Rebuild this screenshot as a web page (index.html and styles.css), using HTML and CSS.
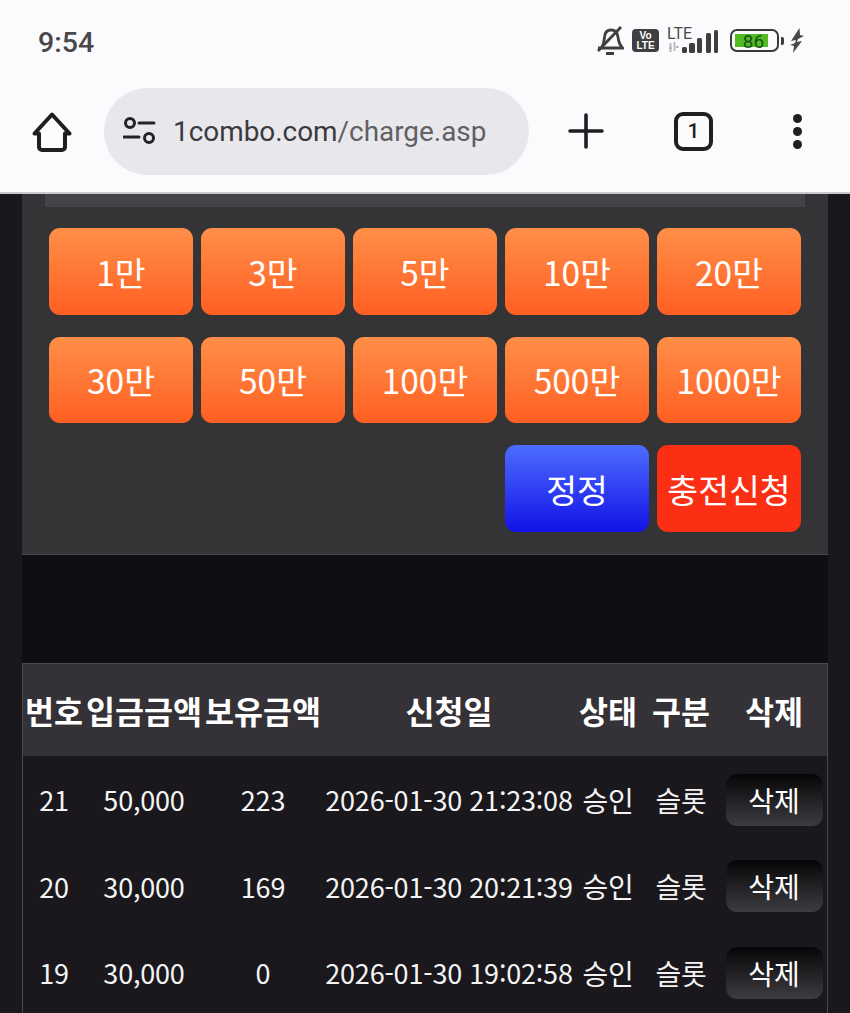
FILE: index.html
```html
<!DOCTYPE html>
<html lang="ko">
<head>
    <meta charset="UTF-8">
    <meta name="viewport" content="width=device-width, initial-scale=1.0">
    <title>1combo charge</title>
    <link rel="stylesheet" href="styles.css">
</head>
<body>
    <header class="browser">
        <div class="status-bar">
            <span class="clock">9:54</span>
            <div class="status-icons">
                <svg class="icon-bell" width="28" height="30" viewBox="0 0 28 30" fill="none" stroke="#3f3f42" stroke-width="2.800">
                    <path d="M6 21c2-3 2-6 2.500-10C9 6 12 4 15 4c4 0 6.500 3 7 7 .4 4 1 7 4.500 11H2"/>
                    <path d="M2 25 25 1" stroke-width="2.800"/>
                    <path d="M10 27.500h8" stroke-width="3"/>
                </svg>
                <div class="volte"><span>Vo</span><span>LTE</span></div>
                <div class="network">
                    <span class="lte">LTE</span>
                    <svg width="52" height="24" viewBox="0 0 52 24">
                        <path d="M2 18h3M3.500 13v9M7.500 12v9M9 17h2.500" stroke="#b5b5b8" stroke-width="1.800" fill="none"/>
                        <rect x="15" y="17" width="5" height="6" rx="1.500" fill="#3f3f42"/>
                        <rect x="22" y="13" width="6" height="10" rx="1.500" fill="#3f3f42"/>
                        <rect x="30" y="8" width="5" height="15" rx="1.500" fill="#3f3f42"/>
                        <rect x="39" y="3" width="5" height="20" rx="1.500" fill="#3f3f42"/>
                        <rect x="47" y="0" width="4" height="23" rx="1.500" fill="#3f3f42"/>
                    </svg>
                </div>
                <div class="battery">
                    <div class="battery-body"><span class="battery-level">86</span></div>
                    <span class="battery-tip"></span>
                </div>
                <svg class="icon-bolt" width="14" height="25" viewBox="0 0 14 25"><path d="M9.500 0 1 13l5-1-1 3-5 2 4 1-1 7 9-12-5 1 1-3 6-3-4-1z" fill="#48484b"/></svg>
            </div>
        </div>
        <div class="toolbar">
            <svg class="tool-home" width="40" height="40" viewBox="0 0 40 40" fill="none" stroke="#1f1f22" stroke-width="4" stroke-linejoin="round">
                <path d="M2.500 21.500 20 2.500l17.500 19H33V35a3 3 0 0 1-3 3H10a3 3 0 0 1-3-3V21.500z"/>
            </svg>
            <div class="address">
                <svg width="34" height="28" viewBox="0 0 34 28" fill="none" stroke="#232327" stroke-width="3">
                    <circle cx="7" cy="6" r="4.500"/>
                    <path d="M16 6h15M1 20h15" stroke-linecap="round"/>
                    <circle cx="26" cy="21" r="4.500"/>
                </svg>
                <span class="url"><span class="url-host">1combo.com</span>/charge.asp</span>
            </div>
            <svg class="tool-plus" width="36" height="36" viewBox="0 0 36 36" stroke="#1f1f22" stroke-width="3.600" stroke-linecap="round">
                <path d="M18 2v32M2 18h32"/>
            </svg>
            <div class="tab-count">1</div>
            <div class="tool-menu"><span></span><span></span><span></span></div>
        </div>
    </header>

    <main class="page">
        <section class="charge-panel">
            <div class="field-edge"></div>
            <div class="amount-grid">
                <button class="btn btn-amount">1만</button>
                <button class="btn btn-amount">3만</button>
                <button class="btn btn-amount">5만</button>
                <button class="btn btn-amount">10만</button>
                <button class="btn btn-amount">20만</button>
                <button class="btn btn-amount">30만</button>
                <button class="btn btn-amount">50만</button>
                <button class="btn btn-amount">100만</button>
                <button class="btn btn-amount">500만</button>
                <button class="btn btn-amount">1000만</button>
                <button class="btn btn-reset">정정</button>
                <button class="btn btn-apply">충전신청</button>
            </div>
        </section>

        <section class="history">
            <table class="history-table">
                <colgroup>
                    <col class="col-no"><col class="col-deposit"><col class="col-hold"><col class="col-date"><col class="col-state"><col class="col-type"><col class="col-del">
                </colgroup>
                <thead>
                    <tr><th>번호</th><th>입금금액</th><th>보유금액</th><th>신청일</th><th>상태</th><th>구분</th><th>삭제</th></tr>
                </thead>
                <tbody>
                    <tr><td>21</td><td>50,000</td><td>223</td><td>2026-01-30 21:23:08</td><td class="cell-ko">승인</td><td class="cell-ko">슬롯</td><td><button class="btn-del">삭제</button></td></tr>
                    <tr><td>20</td><td>30,000</td><td>169</td><td>2026-01-30 20:21:39</td><td class="cell-ko">승인</td><td class="cell-ko">슬롯</td><td><button class="btn-del">삭제</button></td></tr>
                    <tr><td>19</td><td>30,000</td><td>0</td><td>2026-01-30 19:02:58</td><td class="cell-ko">승인</td><td class="cell-ko">슬롯</td><td><button class="btn-del">삭제</button></td></tr>
                </tbody>
            </table>
        </section>
    </main>
</body>
</html>
```

FILE: styles.css
```css
/* General Page Styling */
html, body {
    margin: 0;
    padding: 0;
    height: 1013px;
    overflow: hidden;
}

body {
    background: #1a181c;
    font-family: "Noto Sans CJK KR", "Noto Sans", sans-serif;
    color: #ffffff;
}

/* Browser chrome */
.browser {
    background: #fbfafd;
    height: 192px;
    border-bottom: 2px solid #c9c9cc;
    box-sizing: content-box;
}

.status-bar {
    height: 84px;
    padding: 0 46px 0 38px;
    display: flex;
    justify-content: space-between;
    align-items: center;
    box-sizing: border-box;
}

.clock {
    font-family: Roboto, sans-serif;
    font-size: 28.500px;
    font-weight: 500;
    color: #48484b;
}

.status-icons {
    display: flex;
    align-items: center;
    gap: 8px;
    margin-top: -3px;
}

.icon-bolt {
    margin-left: -2px;
}

.volte {
    width: 27px;
    height: 23px;
    background: #3f3f42;
    border-radius: 4px;
    color: #ffffff;
    font-family: "Liberation Sans", sans-serif;
    font-size: 10px;
    font-weight: 700;
    line-height: 10px;
    display: flex;
    flex-direction: column;
    align-items: center;
    justify-content: center;
}

.network {
    width: 52px;
    height: 28px;
    position: relative;
}

.network svg {
    position: absolute;
    left: 0;
    top: 3px;
}

.lte {
    position: absolute;
    left: 0;
    top: -1px;
    font-family: Roboto, sans-serif;
    font-size: 16px;
    line-height: 16px;
    color: #48484b;
}

.battery {
    display: flex;
    align-items: center;
    gap: 2px;
    margin-left: 3px;
}

.battery-body {
    width: 49px;
    height: 23px;
    border: 2px solid #3a3a3d;
    border-radius: 7px;
    padding: 3px 9px 3px 3px;
    box-sizing: border-box;
}

.battery-level {
    display: block;
    height: 100%;
    padding-left: 4px;
    box-sizing: border-box;
    background: #55bb22;
    color: #14521a;
    font-family: Roboto, sans-serif;
    font-size: 19px;
    line-height: 15px;
    text-align: center;
}

.battery-tip {
    width: 3px;
    height: 8px;
    background: #3a3a3d;
    border-radius: 0 2px 2px 0;
}

.toolbar {
    height: 108px;
    display: flex;
    align-items: center;
    padding-left: 32px;
    box-sizing: border-box;
    margin-top: -7px;
}

.tool-home {
    margin-right: 32px;
    margin-top: 2px;
}

.address {
    width: 425px;
    height: 87px;
    background: #e8e8ec;
    border-radius: 44px;
    display: flex;
    align-items: center;
    gap: 16px;
    padding-left: 19px;
    box-sizing: border-box;
    color: #5f6064;
}

.url {
    font-family: Roboto, sans-serif;
    font-size: 27.900px;
}

.url-host {
    color: #3a3a3e;
}

.tool-plus {
    margin-left: 39px;
}

.tab-count {
    width: 39px;
    height: 39px;
    margin-left: 70px;
    border: 4px solid #1f1f22;
    border-radius: 9px;
    box-sizing: border-box;
    color: #1f1f22;
    font-family: Roboto, sans-serif;
    font-size: 21px;
    font-weight: 500;
    display: flex;
    align-items: center;
    justify-content: center;
}

.tool-menu {
    margin-left: 80px;
    display: flex;
    flex-direction: column;
    gap: 4px;
}

.tool-menu span {
    width: 9px;
    height: 9px;
    background: #1f1f22;
    border-radius: 50%;
}

/* Page body */
.page {
    margin: 0 22px;
    background: #100e13;
    height: 819px;
}

.charge-panel {
    background: #343335;
    height: 360px;
    padding: 0 23px;
    border-bottom: 1px solid #4a4a4c;
    box-sizing: content-box;
}

.field-edge {
    height: 13px;
    background: #444347;
}

.amount-grid {
    display: grid;
    grid-template-columns: repeat(5, 144px);
    grid-auto-rows: 86.500px;
    column-gap: 8px;
    row-gap: 22px;
    padding: 21px 0 0 4px;
}

.btn {
    border: none;
    border-radius: 11px;
    padding: 0;
    color: #ffffff;
    font-family: "Noto Sans CJK KR", sans-serif;
    font-size: 33.500px;
}

.btn-amount {
    background: linear-gradient(#ff8f48, #ff5f22);
}

.btn-reset {
    grid-column: 4;
    background: linear-gradient(#4d6dff, #1212e6);
}

.btn-apply {
    background: #fb2f14;
}

/* History table */
.history {
    margin-top: 108px;
    border-left: 1px solid #4a4a4c;
    border-right: 1px solid #4a4a4c;
    height: 350px;
}

.history-table {
    width: 804px;
    border-collapse: collapse;
    table-layout: fixed;
    background: #1a181c;
}

.col-no { width: 62px; }
.col-deposit { width: 118px; }
.col-hold { width: 120px; }
.col-date { width: 252px; }
.col-state { width: 66px; }
.col-type { width: 80px; }
.col-del { width: 106px; }

.history-table th {
    height: 92px;
    padding: 0;
    background: #343236;
    font-size: 31.500px;
    font-weight: 700;
    white-space: nowrap;
    border-top: 1px solid #4a4a4c;
    box-sizing: border-box;
}

.history-table td {
    height: 86.500px;
    padding: 2px 0 0;
    box-sizing: border-box;
    text-align: center;
    font-size: 27px;
    letter-spacing: -0.200px;
    white-space: nowrap;
    color: #f4f4f4;
}

.history-table td.cell-ko {
    font-size: 28px;
}

.btn-del {
    width: 97px;
    height: 52px;
    border: none;
    border-radius: 11px;
    background: linear-gradient(#060608, #3d3d41);
    color: #ffffff;
    font-family: "Noto Sans CJK KR", sans-serif;
    font-size: 28px;
    line-height: 1;
    padding: 0;
    vertical-align: middle;
}
```
